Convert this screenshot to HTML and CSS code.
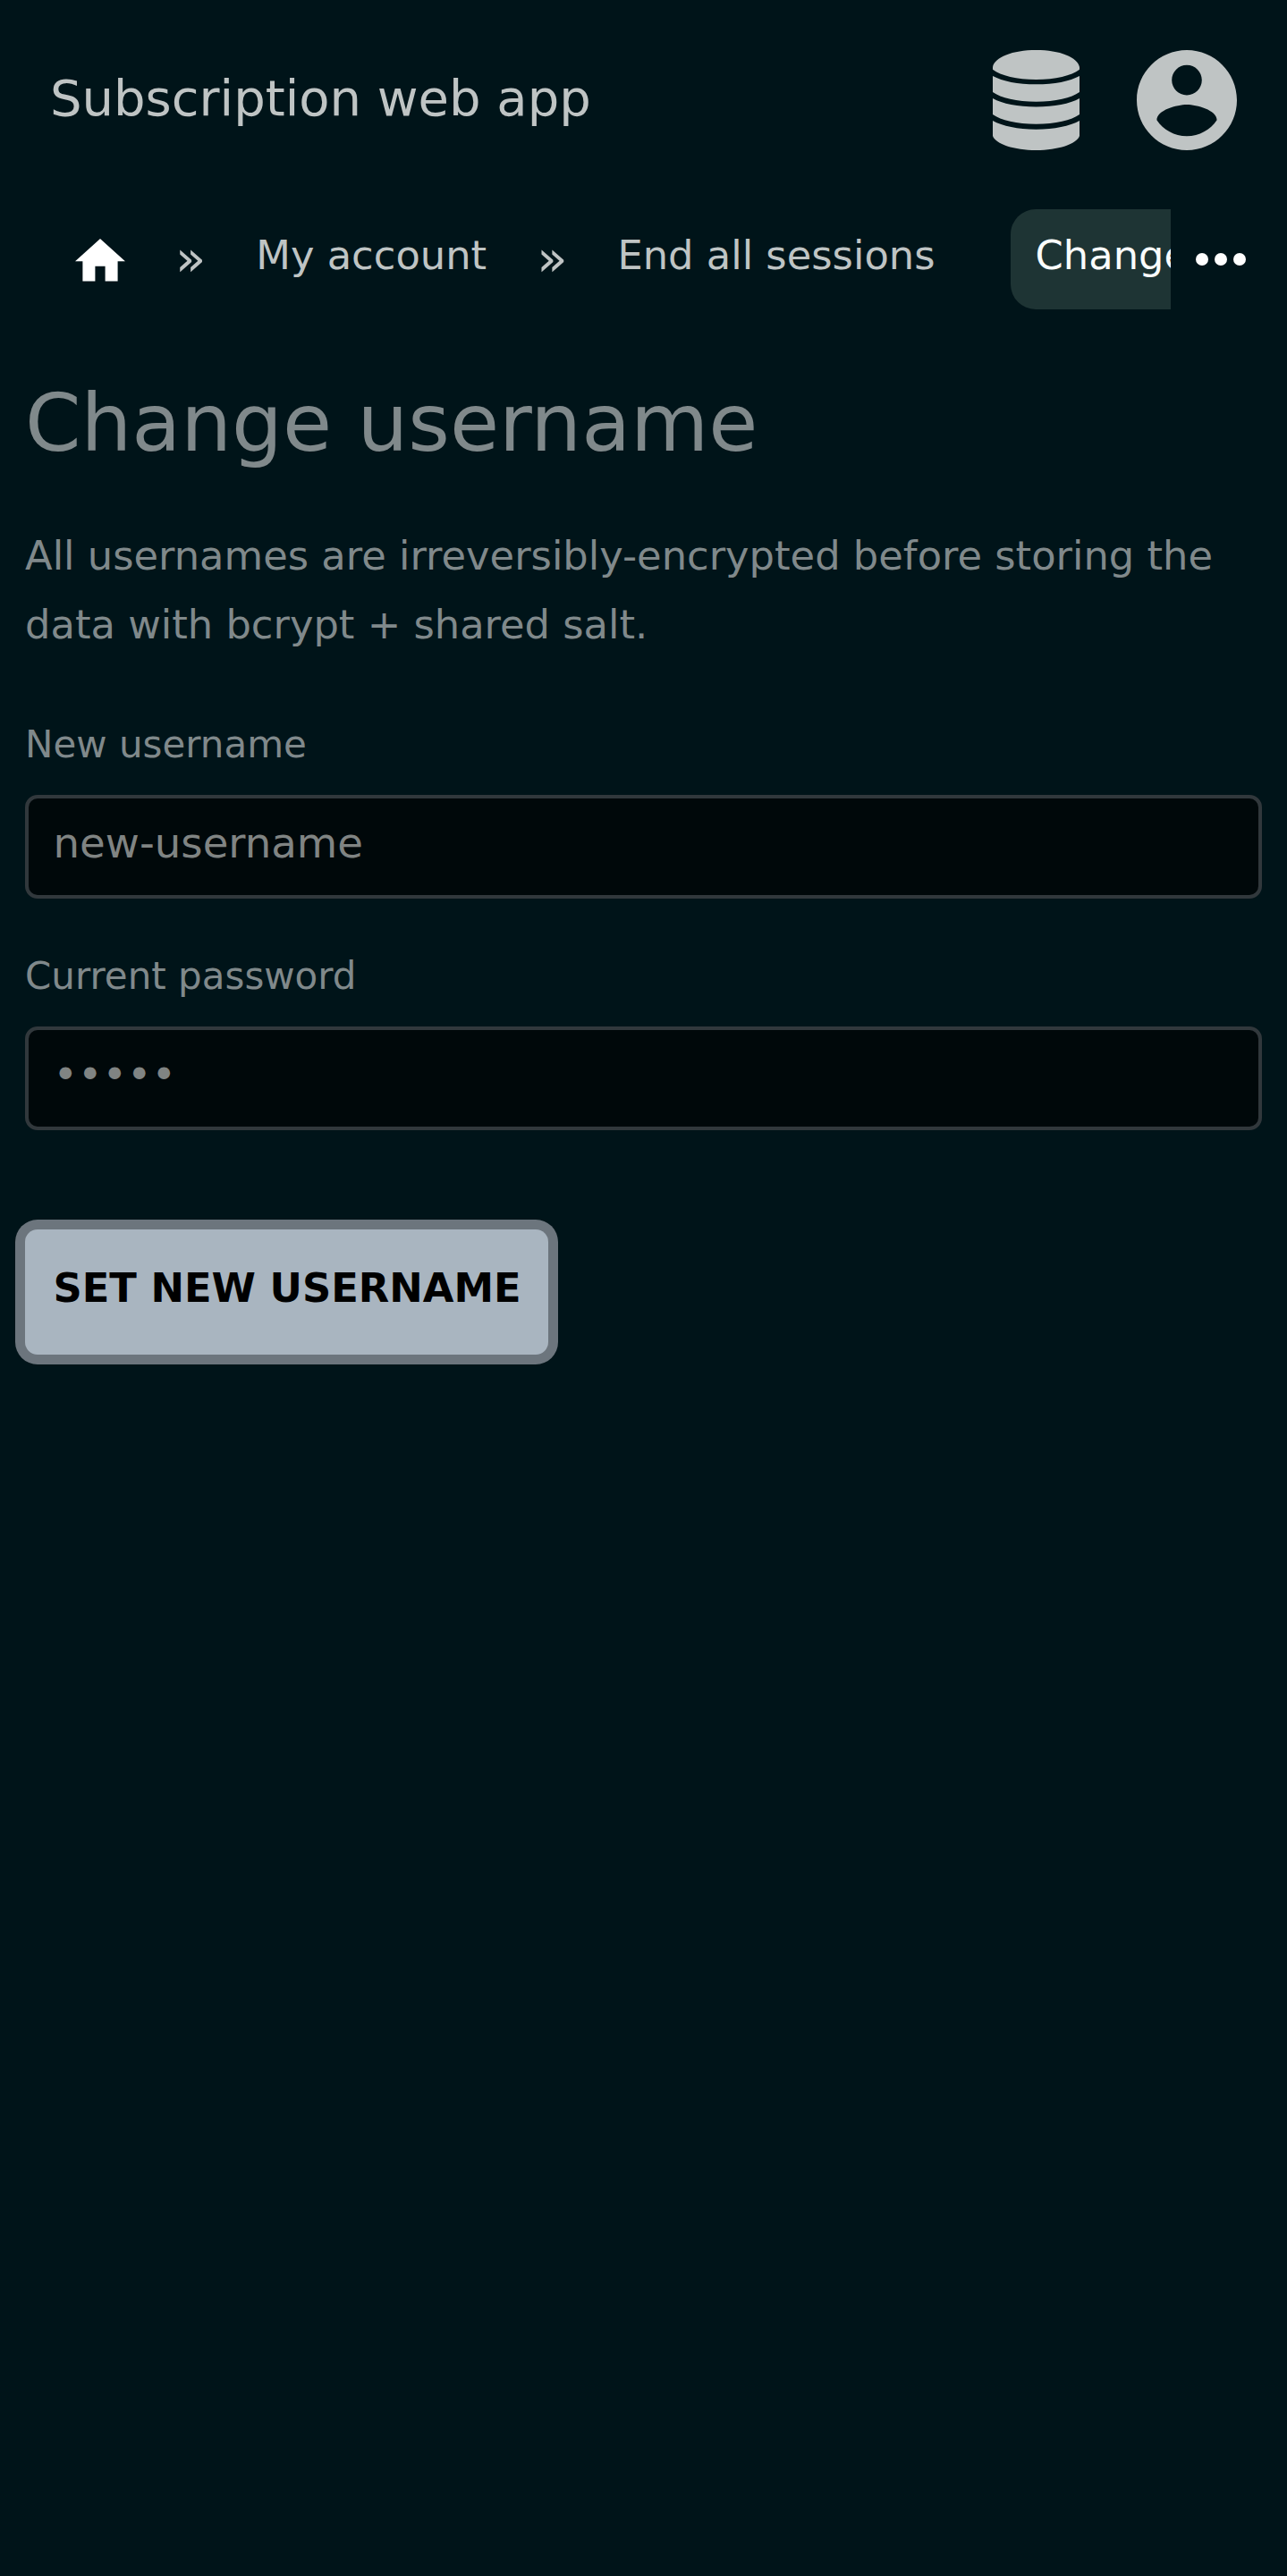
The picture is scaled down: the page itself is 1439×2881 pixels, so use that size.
FILE: index.html
```html
<!DOCTYPE html>
<html lang="en">
<head>
<meta charset="utf-8">
<title>Change username</title>
<link rel="stylesheet" href="styles.css">
</head>
<body>
<header class="header">
  <div class="brand">Subscription web app</div>
  <div class="header-icons">
    <svg class="icon-database" viewBox="0 0 97 112" aria-hidden="true"><path d="M0 19C2 8 22 0 48.500 0S95 8 97 19V21.700C88 28.500 70 33 48.500 33S9 28.500 0 21.700ZM0 29C11 35 28 38.300 48.500 38.300S86 35 97 29V47C88 53.500 70 57.700 48.500 57.700S9 53.500 0 47ZM0 54C11 60 28 63.500 48.500 63.500S86 60 97 54V72C88 78.500 70 82.800 48.500 82.800S9 78.500 0 72ZM0 79C11 85 28 88.700 48.500 88.700S86 85 97 79V96C94 105 73 112 48.500 112S3 105 0 96Z"/></svg>
    <svg class="icon-account" viewBox="2 2 20 20" aria-hidden="true"><path d="M12 2C6.480 2 2 6.480 2 12s4.480 10 10 10 10-4.480 10-10S17.520 2 12 2zm0 3c1.660 0 3 1.340 3 3s-1.340 3-3 3-3-1.340-3-3 1.340-3 3-3zm0 14.200c-2.500 0-4.710-1.280-6-3.220.030-1.990 4-3.080 6-3.080 1.990 0 5.970 1.090 6 3.080-1.290 1.940-3.500 3.220-6 3.220z"/></svg>
  </div>
</header>
<nav class="crumbs">
  <div class="crumb-list">
    <a class="crumb crumb-home"><svg class="icon-home" viewBox="2 3 20 17" aria-hidden="true"><path d="M10 20v-6h4v6h5v-8h3L12 3 2 12h3v8z"/></svg></a>
    <span class="sep">»</span>
    <a class="crumb">My account</a>
    <span class="sep">»</span>
    <a class="crumb">End all sessions</a>
    <a class="crumb crumb-current">Change username</a>
  </div>
  <svg class="icon-more" viewBox="0 0 56 14" aria-hidden="true"><circle cx="7" cy="7" r="7"/><circle cx="28" cy="7" r="7"/><circle cx="49" cy="7" r="7"/></svg>
</nav>
<main class="content">
  <h1 class="title">Change username</h1>
  <p class="intro">All usernames are irreversibly-encrypted before storing the data with bcrypt + shared salt.</p>
  <form class="form">
    <label class="label" for="username">New username</label>
    <input class="field" id="username" type="text" value="new-username">
    <label class="label" for="password">Current password</label>
    <input class="field" id="password" type="password" value="abcde">
    <button class="submit" type="button">SET NEW USERNAME</button>
  </form>
</main>
</body>
</html>
```
FILE: styles.css
```css
* { box-sizing: border-box; }
body {
  margin: 0;
  min-height: 2881px;
  background: #001419;
  color: #80898b;
  font-family: "DejaVu Sans", sans-serif;
  font-size: 44.8px;
}
svg { display: block; flex: none; fill: currentColor; }
.header {
  height: 222px;
  padding: 0 56px;
  display: flex;
  align-items: center;
  justify-content: space-between;
  color: #bfc4c4;
}
.brand { font-size: 56px; padding-bottom: 3px; }
.header-icons { display: flex; gap: 64px; padding-top: 2px; }
.icon-database { width: 97px; height: 112px; }
.icon-account { width: 112px; height: 112px; }
.crumbs {
  height: 112px;
  margin-top: 12px;
  padding: 0 46px 0 56px;
  display: flex;
  align-items: center;
  justify-content: space-between;
  color: #bfc4c4;
}
.crumb-list {
  width: 1253px;
  display: flex;
  gap: 28px;
  overflow: hidden;
  white-space: nowrap;
}
.crumb {
  flex: none;
  height: 112px;
  padding: 0 28px;
  line-height: 104px;
}
.crumb-home { padding-top: 33px; color: #fff; }
.icon-home { width: 56px; height: 47.600px; }
.sep { flex: none; font-size: 56px; line-height: 109px; }
.crumb-current {
  margin-left: 28px;
  border-radius: 28px;
  background: #1e3434;
  color: #fafcfc;
}
.icon-more { width: 56px; height: 14px; color: #fff; }
.content { padding: 71px 28px 0; }
.title { margin: 0; font-size: 89.600px; font-weight: 400; line-height: 112px; }
.intro { margin: 54px 0 68px; line-height: 77px; }
.form { display: flex; flex-direction: column; }
.label { font-size: 42px; line-height: 56px; margin-bottom: 28px; }
.field {
  height: 115.500px;
  margin-bottom: 59.500px;
  padding: 0 27.500px 8px;
  border: 4px solid #31383c;
  border-radius: 14px;
  background: #00080a;
  color: #808483;
  font: 46.670px "DejaVu Sans", sans-serif;
}
.submit {
  align-self: flex-start;
  height: 140px;
  margin-top: 52px;
  padding: 0 30px 9px 31.500px;
  border: 0;
  border-radius: 14px;
  background: #a9b5c0;
  box-shadow: 0 0 0 11px #6c757d;
  color: #000;
  font: bold 44.800px "DejaVu Sans", sans-serif;
}
```
